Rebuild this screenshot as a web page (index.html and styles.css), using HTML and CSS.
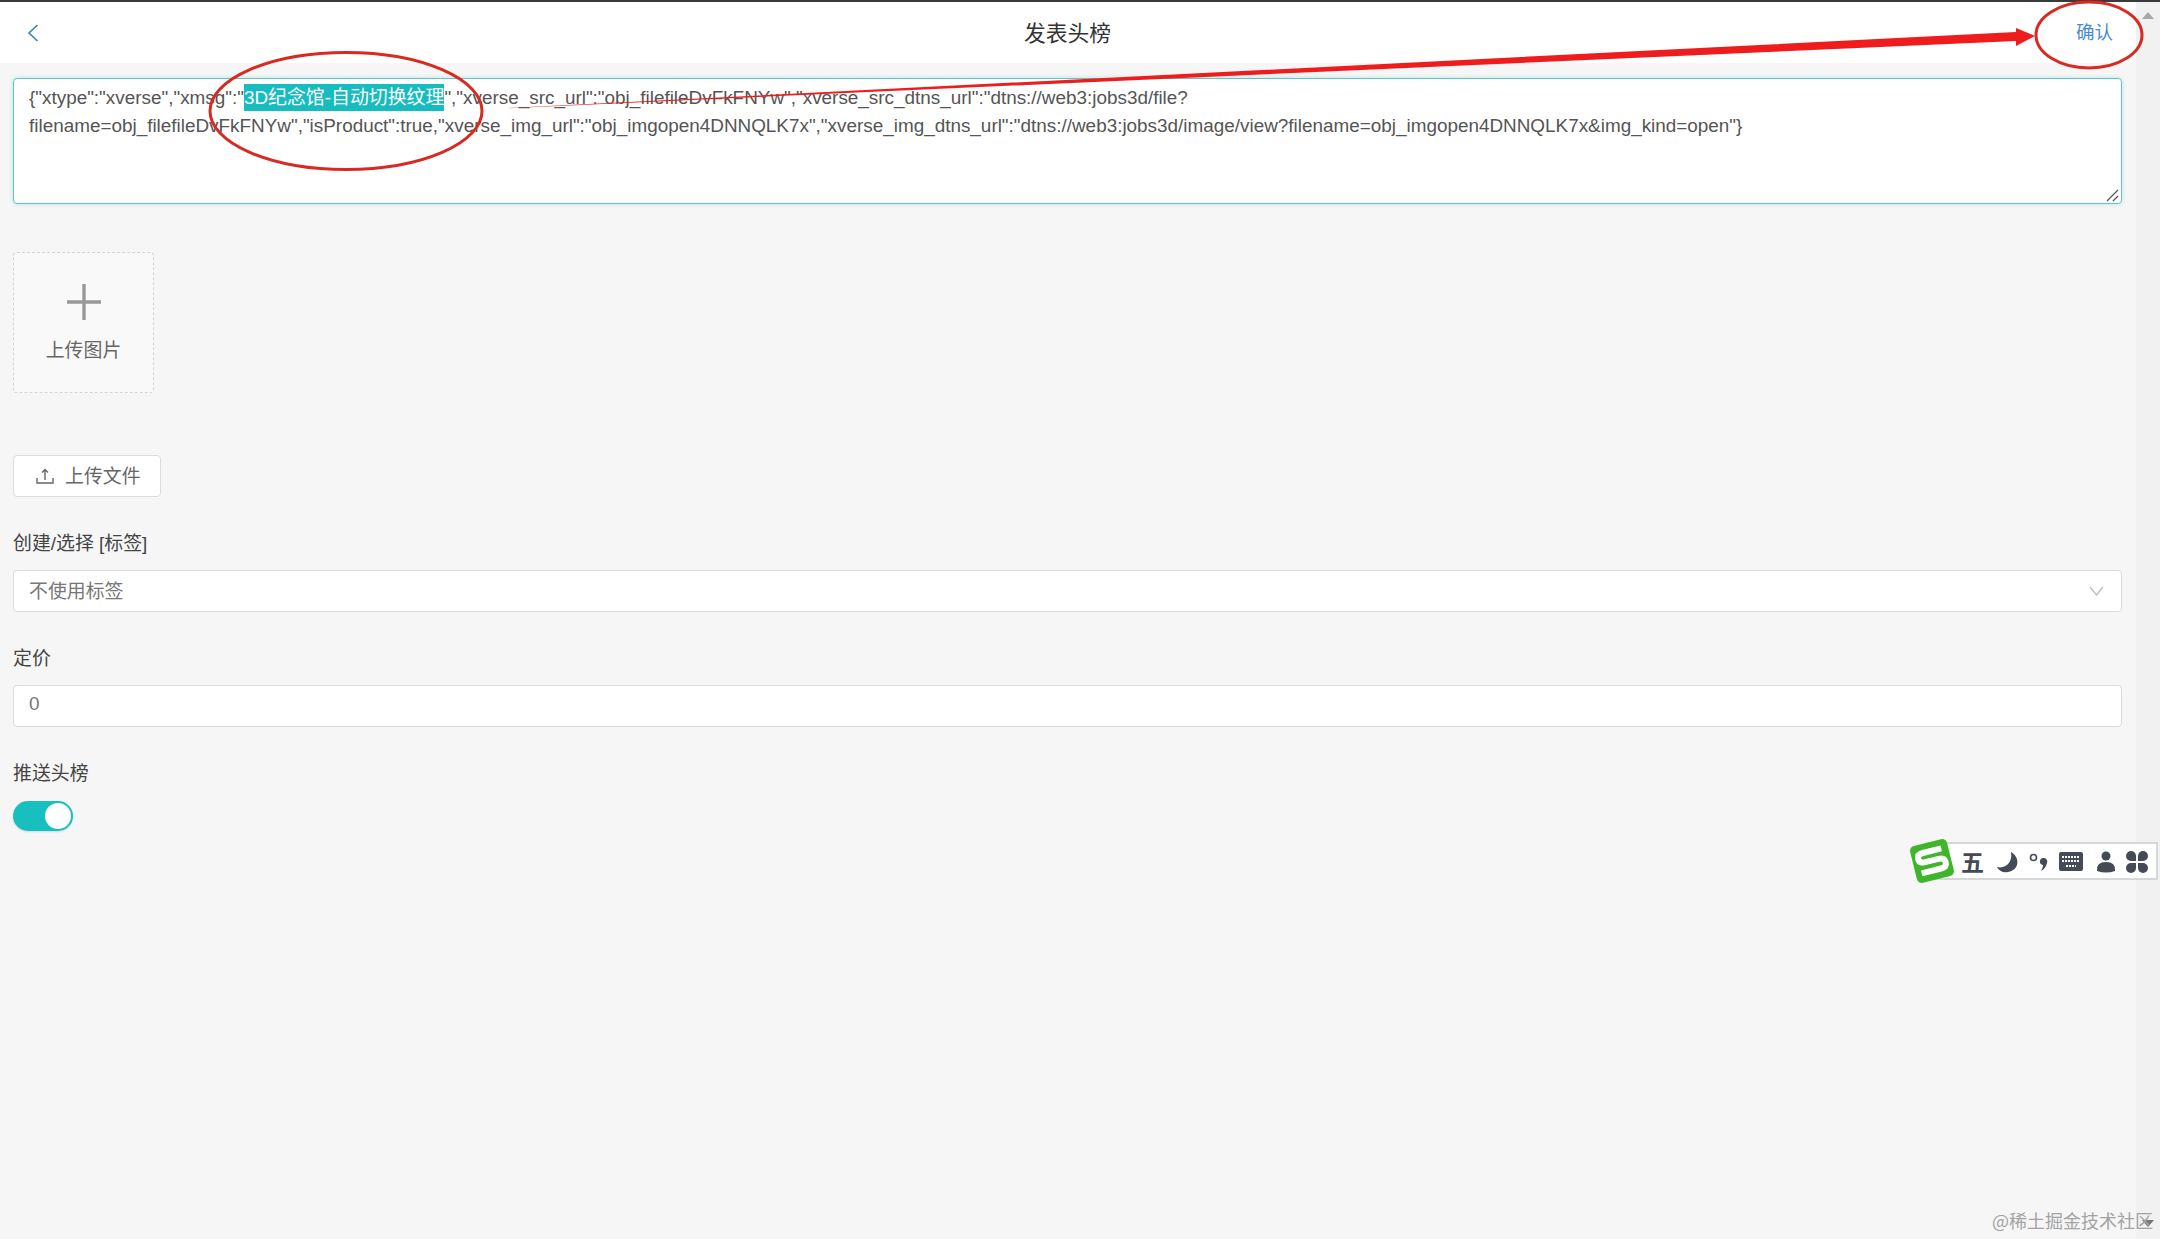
FILE: index.html
```html
<!DOCTYPE html>
<html lang="zh">
<head>
<meta charset="utf-8">
<title>发表头榜</title>
<link rel="stylesheet" href="styles.css">
</head>
<body>
<div class="page">
  <main class="main">
    <header class="header">
      <svg class="back" width="12" height="18" viewBox="0 0 12 18"><path d="M10.5 1 L2 9 L10.5 17" fill="none" stroke="#3f7fbf" stroke-width="1.6"/></svg>
      <h1 class="title">发表头榜</h1>
      <span class="confirm">确认</span>
    </header>
    <form class="form">
      <div class="textarea">{"xtype":"xverse","xmsg":"<span class="selected">3D纪念馆-自动切换纹理</span>","xverse_src_url":"obj_filefileDvFkFNYw","xverse_src_dtns_url":"dtns://web3:jobs3d/file?filename=obj_filefileDvFkFNYw","isProduct":true,"xverse_img_url":"obj_imgopen4DNNQLK7x","xverse_img_dtns_url":"dtns://web3:jobs3d/image/view?filename=obj_imgopen4DNNQLK7x&amp;img_kind=open"}
        <svg class="grip" width="14" height="14" viewBox="0 0 14 14"><path d="M1 13 L12 2 M7 13 L12 8" stroke="#555" stroke-width="1.2" fill="none"/></svg>
      </div>
      <div class="upload-card">
        <svg width="34" height="36" viewBox="0 0 34 36"><path d="M17 0 V36 M0 18 H34" stroke="#999" stroke-width="3.4" fill="none"/></svg>
        <span class="upload-text">上传图片</span>
      </div>
      <div class="file-button">
        <svg width="18" height="16" viewBox="0 0 18 16"><path d="M9 12 V1.500 M6 4.500 L9 1.500 L12 4.500 M1 10 V15 H17 V10" stroke="#666" stroke-width="1.4" fill="none"/></svg>
        <span class="button-text">上传文件</span>
      </div>
      <label class="label">创建/选择 [标签]</label>
      <div class="field">
        <span class="field-text">不使用标签</span>
        <svg width="15" height="10" viewBox="0 0 15 10"><path d="M1 1 L7.500 9 L14 1" stroke="#bbb" stroke-width="1.3" fill="none"/></svg>
      </div>
      <label class="label">定价</label>
      <div class="field"><span class="field-text">0</span></div>
      <label class="label">推送头榜</label>
      <div class="toggle"><span class="knob"></span></div>
    </form>
  </main>
  <aside class="scrollbar">
    <span class="arrow-up"></span>
    <span class="arrow-down"></span>
  </aside>
</div>

<svg class="annotations" width="2160" height="1239" viewBox="0 0 2160 1239">
  <ellipse cx="346" cy="111" rx="136" ry="58.500" fill="none" stroke="#d92a22" stroke-width="3"/>
  <ellipse cx="2089" cy="35" rx="53" ry="33" fill="none" stroke="#d92a22" stroke-width="3"/>
  <polygon points="500,108.500 2016,32 2016,28 2035,36 2016,46 2016,41 1440,66.500" fill="#ee1c1c"/>
</svg>

<div class="ime">
  <svg width="252" height="48" viewBox="0 0 252 48">
    <rect x="20" y="6" width="229" height="36" fill="#fff" stroke="#c9ccd0" stroke-width="1.500"/>
    <g transform="rotate(-14 24 24)">
      <rect x="5" y="5" width="38" height="38" rx="5" fill="#3fb52a"/>
      <path d="M36 14 H17 Q11 14 11 19 Q11 23.500 17 23.500 H31 Q37 23.500 37 28.500 Q37 33.500 31 33.500 H11" fill="none" stroke="#fff" stroke-width="6"/>
    </g>
    <text class="ime-char" x="53" y="34">五</text>
    <path d="M103 15 C112 20 112 33 100 35 C95 36 91 34 89 30 C97 32 105 26 103 15 Z" fill="#444a56"/>
    <circle cx="125.500" cy="20.500" r="3" fill="none" stroke="#444a56" stroke-width="1.600"/>
    <path d="M136 21 a3.500 3.500 0 0 1 3 5 q-1 5 -6 8 q2 -3 2 -6 a3.500 3.500 0 0 1 1 -7 z" fill="#444a56"/>
    <rect x="151" y="15" width="24" height="19" rx="2" fill="#444a56"/>
    <path d="M154 20 H172 M154 24 H172 M158 29 H168" stroke="#fff" stroke-width="2" stroke-dasharray="2 1"/>
    <circle cx="198" cy="19" r="4.500" fill="#444a56"/>
    <path d="M189 34 Q188 25 198 25 Q208 25 207 34 Q198 37 189 34 Z" fill="#444a56"/>
    <g fill="#444a56">
      <path d="M228 24 V19 a5 5 0 1 0 -5 5 Z"/>
      <path d="M230 24 V19 a5 5 0 1 1 5 5 Z"/>
      <path d="M228 26 V31 a5 5 0 1 1 -5 -5 Z"/>
      <path d="M230 26 V31 a5 5 0 1 0 5 -5 Z"/>
    </g>
  </svg>
</div>

<div class="watermark">@稀土掘金技术社区</div>
</body>
</html>
```

FILE: styles.css
```css
* { box-sizing: border-box; }

html, body {
  margin: 0;
  height: 1239px;
  overflow: hidden;
}

body {
  position: relative;
  background: #f6f6f6;
  font-family: "Liberation Sans", "Noto Sans CJK SC", sans-serif;
  font-size: 18px;
  color: #555;
}

.page {
  display: flex;
  height: 1239px;
  border-top: 2px solid #3a3a3a;
}

.main {
  flex: 1;
  min-width: 0;
}

.header {
  display: grid;
  grid-template-columns: 1fr auto 1fr;
  align-items: center;
  height: 61px;
  padding: 0 23px 3px 27px;
  background: #fff;
}

.title {
  margin: 0 5px 0 0;
  font-size: 21.800px;
  font-weight: 400;
  color: #333;
}

.confirm {
  justify-self: end;
  font-size: 18.500px;
  color: #4a8bd0;
}

.back { margin-top: 3px; }

.form {
  display: flex;
  flex-direction: column;
  align-items: flex-start;
  padding: 15px 14px 0 13px;
}

.textarea {
  position: relative;
  width: 100%;
  height: 126px;
  padding: 5px 15px;
  background: #fff;
  border: 1px solid #62c6c6;
  border-radius: 4px;
  box-shadow: 0 0 4px rgba(60, 190, 190, .35);
  font-size: 18.900px;
  line-height: 27.500px;
  color: #555;
}

.selected {
  padding: 3px 0;
  background: #17bcc0;
  color: #fff;
}

.grip {
  position: absolute;
  right: 1px;
  bottom: 1px;
}

.upload-card {
  display: flex;
  flex-direction: column;
  align-items: center;
  width: 141px;
  height: 141px;
  margin-top: 48px;
  padding-top: 31px;
  background: #f9f9f9;
  border: 1px dashed #d4d4d4;
  border-radius: 4px;
}

.upload-text {
  margin-top: 18px;
  font-size: 18.900px;
  line-height: 26px;
  color: #666;
}

.file-button {
  display: flex;
  align-items: center;
  gap: 11px;
  width: 148px;
  height: 42px;
  margin-top: 62px;
  padding-left: 22px;
  background: #fff;
  border: 1px solid #dcdcdc;
  border-radius: 4px;
  font-size: 18.900px;
  color: #666;
}

.button-text,
.field-text {
  margin-top: -4px;
}

.label {
  height: 27px;
  margin: 33px 0 13px;
  font-size: 18.900px;
  line-height: 27px;
  color: #444;
}

.field {
  display: flex;
  align-items: center;
  justify-content: space-between;
  width: 100%;
  height: 42px;
  padding: 0 17px 0 15px;
  background: #fff;
  border: 1px solid #dcdcdc;
  border-radius: 4px;
  font-size: 18.900px;
  color: #777;
}

.toggle {
  position: relative;
  width: 60px;
  height: 30px;
  margin-top: 1px;
  background: #17bfbf;
  border-radius: 15px;
  box-shadow: 0 1px 2px rgba(0, 0, 0, .12);
}

.knob {
  position: absolute;
  top: 2px;
  right: 2px;
  width: 26px;
  height: 26px;
  background: #fff;
  border-radius: 50%;
}

.scrollbar {
  position: relative;
  flex: none;
  width: 24px;
  background: #f1f1f1;
}

.arrow-up,
.arrow-down {
  position: absolute;
  left: 6px;
  width: 0;
  height: 0;
  border-left: 6px solid transparent;
  border-right: 6px solid transparent;
}

.arrow-up {
  top: 10px;
  border-bottom: 7px solid #a8a8a8;
}

.arrow-down {
  bottom: 12px;
  border-top: 7px solid #777;
}

.annotations {
  position: absolute;
  top: 0;
  left: 0;
  pointer-events: none;
}

.ime {
  position: absolute;
  top: 837px;
  left: 1908px;
  line-height: 0;
}

.ime-char {
  font-family: "Noto Sans CJK SC", sans-serif;
  font-size: 23px;
  font-weight: 700;
  fill: #444a56;
}

.watermark {
  position: absolute;
  right: 7px;
  bottom: 8px;
  font-family: "Noto Sans CJK SC", sans-serif;
  font-size: 18px;
  line-height: 22px;
  color: #a3a3a3;
}
```
